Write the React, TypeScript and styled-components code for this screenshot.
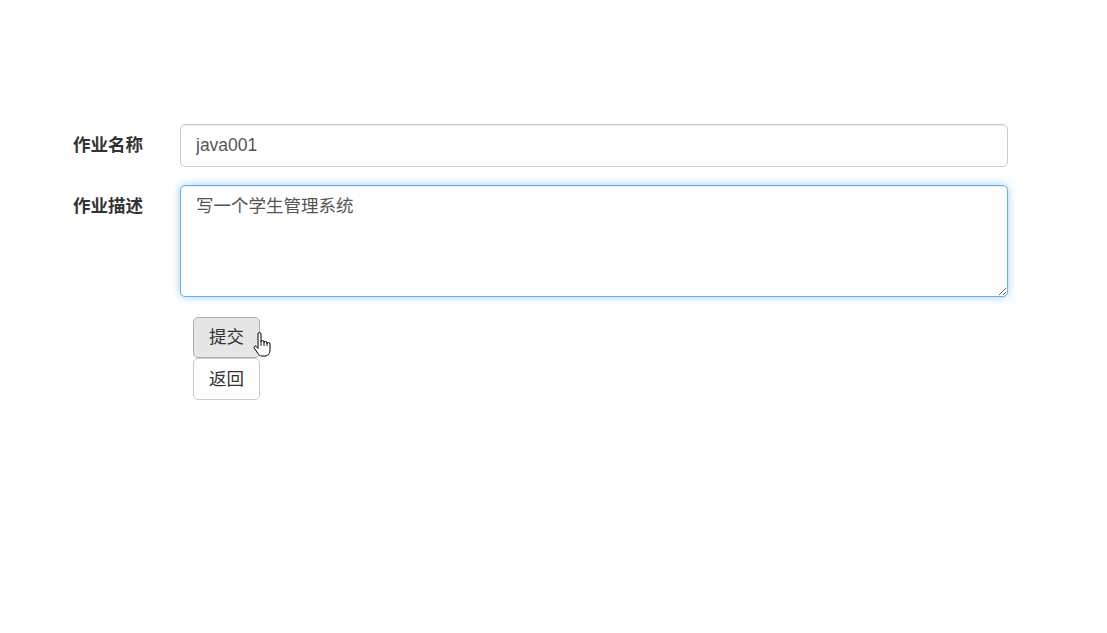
import styled, { createGlobalStyle } from "styled-components";

const GlobalStyle = createGlobalStyle`
    html, body {
        margin: 0;
        background: #fff;
    }
    body {
        font-family: "Liberation Sans", Arial, "Noto Sans CJK SC", sans-serif;
        font-size: 17.5px;
        line-height: 1.42857;
        color: #333;
    }
    * {
        box-sizing: border-box;
    }
`;

const App = () => {
    return (
        <>
            <GlobalStyle />
            <Form>
                <Label>作业名称</Label>
                <Input type="text" defaultValue="java001" />
                <Label>作业描述</Label>
                <TextArea rows={3} defaultValue="写一个学生管理系统" />
                <span />
                <Actions>
                    <ButtonSlot>
                        <Button $active>提交</Button>
                        <Pointer />
                    </ButtonSlot>
                    <Button>返回</Button>
                </Actions>
            </Form>
        </>
    );
};

const Form = styled.form`
    display: grid;
    grid-template-columns: 107px 828px;
    row-gap: 18.5px;
    padding: 124px 0 0 73px;
`;

const Label = styled.label`
    font-weight: 700;
    padding-top: 9px;
    color: #333;
`;

const Input = styled.input`
    display: block;
    width: 100%;
    height: 42.5px;
    padding: 7.5px 15px;
    font: inherit;
    color: #555;
    background: #fff;
    border: 1px solid #ccc;
    border-radius: 5px;
    box-shadow: inset 0 1px 1px rgba(0, 0, 0, 0.075);
    outline: none;
`;

const TextArea = styled.textarea`
    display: block;
    width: 100%;
    height: 112px;
    padding: 7.5px 15px;
    font: inherit;
    color: #555;
    background: #fff;
    border: 1px solid #66afe9;
    border-radius: 5px;
    box-shadow: inset 0 1px 1px rgba(0, 0, 0, 0.075), 0 0 8px rgba(102, 175, 233, 0.6);
    outline: none;
    resize: vertical;
`;

const Actions = styled.div`
    display: flex;
    flex-direction: column;
    align-items: flex-start;
    padding-left: 13px;
    margin-top: 1px;
`;

const ButtonSlot = styled.div`
    position: relative;
`;

const Button = styled.button<{ $active?: boolean }>`
    display: block;
    padding: 7.5px 15px;
    font: inherit;
    line-height: 1.42857;
    color: #333;
    background: ${(p) => (p.$active ? "#e6e6e6" : "#fff")};
    border: 1px solid ${(p) => (p.$active ? "#adadad" : "#ccc")};
    border-radius: 5px;
    cursor: pointer;
`;

const PointerWrap = styled.svg`
    position: absolute;
    left: 60px;
    top: 15px;
`;

const Pointer = () => (
    <PointerWrap width="18" height="26" viewBox="0 0 18 26">
        <path
            d="M5 2 a1.5 1.5 0 0 1 3 0 V10 a1.5 1.5 0 0 1 3 0 V11 a1.5 1.5 0 0 1 3 0 V12 a1.5 1.5 0 0 1 3 0 V18 c0 3.2 -2 6 -5 6 H9 c-2 0 -3 -1 -4 -2.5 L1.2 16 a1.3 1.3 0 0 1 2 -1.6 L5 16.5 Z"
            fill="#fff"
            stroke="#000"
            strokeWidth="1"
            strokeLinejoin="round"
        />
        <path d="M8 10 V14 M11 11 V14 M14 12 V14" stroke="#000" strokeWidth="0.9" />
    </PointerWrap>
);

export default App;
